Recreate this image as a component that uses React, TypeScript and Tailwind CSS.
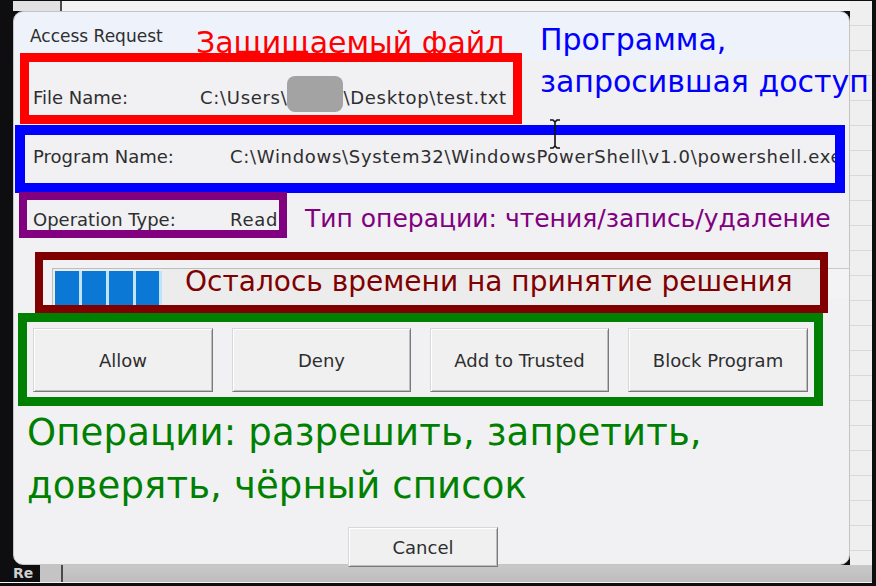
import React from 'react'

const btn =
  "flex items-center justify-center bg-[#f0f0f0] border border-t-[#d8d8d8] border-l-[#d8d8d8] border-r-[#7a7a7a] border-b-[#7a7a7a] shadow-[inset_1px_1px_0_#ffffff,inset_-1px_-1px_0_#bdbdbd] text-[18px] text-[#2e2e2e]"

function Backdrop() {
  return (
    <>
      {/* window strips behind the dialog */}
      <div className="absolute left-[13px] top-[1px] flex h-[10px] w-[859px]">
        <div className="w-[49px] bg-[#e2e2e2] border-r-2 border-[#4a4a4a]" />
        <div className="flex-1 bg-[#f3f3f3]" />
      </div>
      <div className="absolute left-[850px] top-[1px] h-[581px] w-[22px] bg-[repeating-linear-gradient(to_bottom,#efefef_0px,#efefef_24px,#d9d9d9_24px,#d9d9d9_25px)]" />
      <div className="absolute left-0 top-[565px] flex h-[17px] w-[872px]">
        <div className="w-[40px] bg-[#0e0e11] pl-[13px] text-[14px] leading-[17px] font-bold text-[#cfcfcf]">Re</div>
        <div className="w-[23px] bg-[#c4c4c4] border-r-2 border-[#4a4a4a]" />
        <div className="flex-1 bg-[linear-gradient(to_bottom,#c9c9c9,#bdbdbd)]" />
      </div>
      <div className="absolute left-0 top-[582px] h-px w-[872px] bg-[#f4f4f4]" />
    </>
  )
}

function Field({ label, width, children }: { label: string; width: string; children: React.ReactNode }) {
  return (
    <div className="flex items-baseline whitespace-nowrap text-[18px] leading-[18px] text-[#2e2e2e]">
      <span className={`shrink-0 ${width}`}>{label}</span>
      <span className="tracking-[0.7px]">{children}</span>
    </div>
  )
}

function Dialog() {
  return (
    <div className="relative h-[554px] w-[837px] rounded-[10px] border border-[#c4c4c4] bg-[linear-gradient(to_bottom,#eef2fa_0px,#eef2fa_48px,#f1f0f3_48px)]">
      {/* header: title, file name and the two labels */}
      <div className="flex items-start">
        <div className="ml-[6px] w-[502px] shrink-0">
          <div className="flex h-[41px] whitespace-nowrap">
            <span className="mt-[16px] w-[176px] shrink-0 pl-[10px] text-[17px] leading-[17px] text-[#2e2e2e]">Access Request</span>
            <span className="mt-[16px] text-[30px] leading-[30px] text-[#ff0000]">Защищаемый файл</span>
          </div>
          <div className="h-[71px] border-[9px] border-[#ff0000] pl-[4px] pt-[24px]">
            <Field label="File Name:" width="w-[167px]">
              C:\Users\
              <span className="-my-[10px] inline-block h-[36px] w-[56px] rounded-[8px] bg-[#a3a3a3] align-[2px]" />
              \Desktop\test.txt
            </Field>
          </div>
        </div>
        <div className="ml-[18px] mt-[7px] shrink-0 whitespace-nowrap text-[30px] leading-[42px] text-[#0000ff]">
          <div>Программа,</div>
          <div>запросившая доступ</div>
        </div>
      </div>

      {/* program */}
      <div className="ml-[1px] mt-[1px] h-[68px] w-[830px] overflow-hidden border-[10px] border-[#0000ff] pl-[8px] pt-[13px]">
        <Field label="Program Name:" width="w-[197px]">
          C:\Windows\System32\WindowsPowerShell\v1.0\powershell.exe
        </Field>
      </div>

      {/* operation */}
      <div className="-mt-px ml-[5px] flex items-start">
        <div className="h-[46px] w-[268px] shrink-0 overflow-hidden border-[8px] border-[#800080] pl-[6px] pt-[11px]">
          <Field label="Operation Type:" width="w-[197px]">Read</Field>
        </div>
        <span className="ml-[18px] mt-[14px] whitespace-nowrap text-[25px] leading-[25px] text-[#800080]">
          Тип операции: чтения/запись/удаление
        </span>
      </div>

      {/* timer */}
      <div className="ml-[21px] mt-[14px] flex">
        <div className="h-[61px] w-[793px] shrink-0 overflow-hidden border-[8px] border-[#800000]">
          <div className="grid">
            <div className="col-start-1 row-start-1 ml-[9px] mt-[8px] h-[40px] border-l border-t border-[#bdbdbd] bg-[#ececec] pl-[2px] pt-[2px]">
              <div className="flex h-full w-[107px] gap-[3px] bg-[#bfe4f8]">
                <div className="w-[24px] bg-[#0b78d6]" />
                <div className="w-[24px] bg-[#0b78d6]" />
                <div className="w-[24px] bg-[#0b78d6]" />
                <div className="w-[23px] bg-[#0b78d6]" />
              </div>
            </div>
            <span className="col-start-1 row-start-1 ml-[142px] mt-[8px] whitespace-nowrap text-[28px] leading-[28px] text-[#800000]">
              Осталось времени на принятие решения
            </span>
          </div>
        </div>
        <div className="mt-[16px] h-[30px] flex-1 border-t border-[#c8c8c8] bg-[#f3f3f5]" />
      </div>

      {/* actions */}
      <div className="ml-[4px] h-[93px] w-[805px] border-[9px] border-[#008000] pl-[6px] pt-[6px]">
        <div className="flex gap-[19px]">
          <div className={`h-[64px] w-[180px] ${btn}`}>Allow</div>
          <div className={`h-[64px] w-[179px] ${btn}`}>Deny</div>
          <div className={`h-[64px] w-[179px] ${btn}`}>Add to Trusted</div>
          <div className={`h-[64px] w-[180px] ${btn}`}>Block Program</div>
        </div>
      </div>

      <div className="ml-[13px] whitespace-nowrap text-[37px] leading-[53px] tracking-[0.15px] text-[#008000]">
        <div>Операции: разрешить, запретить,</div>
        <div>доверять, чёрный список</div>
      </div>

      <div className={`ml-[334px] mt-[15px] h-[40px] w-[150px] ${btn}`}>Cancel</div>
    </div>
  )
}

function Cursor() {
  return (
    <svg className="absolute left-[549px] top-[119px]" width="12" height="30" viewBox="0 0 12 30">
      <path d="M1 1h3l2 2 2-2h3M6 3v24M1 29h3l2-2 2 2h3" fill="none" stroke="#111" strokeWidth="1.6" />
    </svg>
  )
}

export default function App() {
  return (
    <div className="relative h-[586px] w-[876px] overflow-hidden bg-[#0e0e11] font-['DejaVu_Sans',sans-serif]">
      <Backdrop />
      <div className="relative pl-[13px] pt-[11px]">
        <Dialog />
      </div>
      <Cursor />
    </div>
  )
}
